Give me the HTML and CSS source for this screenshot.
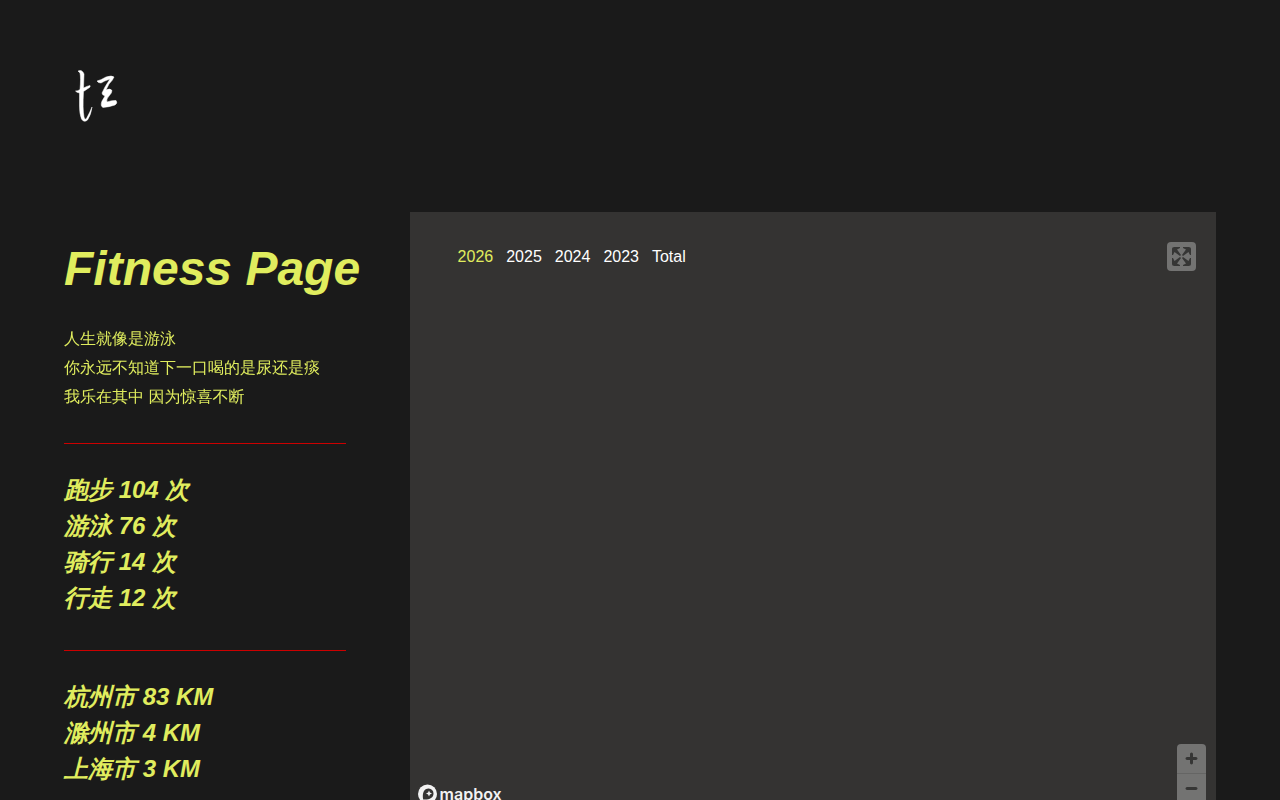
FILE: index.html
```html
<!DOCTYPE html>
<html lang="en">
<head>
<meta charset="utf-8">
<meta name="viewport" content="width=device-width, initial-scale=1">
<title>Fitness Page</title>
<link rel="stylesheet" href="styles.css">
</head>
<body>
<header class="header">
  <a class="logo" href="#" aria-label="Home">
    <svg viewBox="0 0 64 64" width="64" height="64" aria-hidden="true">
      <path d="M14 7Q18 5 20 10L19.500 24Q23 22 26 21.500Q27 23 24 24.500L19.500 27.500Q18.500 45 20 53Q21 57 23 53.500Q26 48 28 43Q27 51 23.500 56Q20 59 17.500 55Q15.500 50 15.500 42L15.500 29Q12.500 28.500 11.500 27Q14 27 16 25.500Q17 14 16 9Z"/>
      <path d="M33 17Q37 16 42 13Q48 11 50 13Q49 16 45 20L42 26Q46 24 48 26.500Q48 29 45 32Q42 35 43 38Q48 36 52 36.500Q54 39 51 41Q45 43 39 43.500Q36 42 38 37L41 32Q38 31 38 29L41 23Q44 18 46 15Q40 17 37 19Q34 19 33 17Z"/>
    </svg>
  </a>
</header>
<main class="layout">
  <section class="sidebar">
    <h1 class="title">Fitness Page</h1>
    <p class="intro">人生就像是游泳<br>你永远不知道下一口喝的是尿还是痰<br>我乐在其中 因为惊喜不断</p>
    <hr class="rule">
    <ul class="stats">
      <li>跑步 104 次</li>
      <li>游泳 76 次</li>
      <li>骑行 14 次</li>
      <li>行走 12 次</li>
    </ul>
    <hr class="rule">
    <ul class="stats">
      <li>杭州市 83 KM</li>
      <li>滁州市 4 KM</li>
      <li>上海市 3 KM</li>
    </ul>
  </section>
  <section class="map" aria-label="Map">
    <div class="map-top">
      <nav class="years" aria-label="Year">
        <button class="year year-active" type="button">2026</button>
        <button class="year" type="button">2025</button>
        <button class="year" type="button">2024</button>
        <button class="year" type="button">2023</button>
        <button class="year" type="button">Total</button>
      </nav>
      <div class="control-group">
        <button class="control" type="button" aria-label="Enter fullscreen">
          <svg viewBox="0 0 29 29" width="29" height="29"><path d="M24 16v5.500c0 1.750-.750 2.500-2.500 2.500H16v-1l3-1.500-4-5.500 1-1 5.500 4 1.500-3h1zM6 16l1.500 3 5.500-4 1 1-4 5.500 3 1.500v1H7.500C5.750 24 5 23.250 5 21.500V16h1zm7-11v1l-3 1.500 4 5.500-1 1-5.500-4L6 13H5V7.500C5 5.750 5.750 5 7.500 5H13zm11 2.500c0-1.750-.750-2.500-2.500-2.500H16v1l3 1.500-4 5.500 1 1 5.500-4 1.500 3h1V7.500z"/></svg>
        </button>
      </div>
    </div>
    <div class="map-bottom">
      <a class="mapbox" href="#" aria-label="Mapbox homepage">
        <svg viewBox="0 0 20 20" width="20" height="20" aria-hidden="true"><circle class="mark" cx="9.500" cy="10" r="9.500"/><path class="drop" d="M5.200 15.500C4 9 6 4.500 10.700 4.500A5 5 0 0 1 15.500 9.500C15.500 14 11 16 5.200 15.500Z"/><path class="mark" d="M11 6.500l.9 2.100 2.100.9-2.100.9-.9 2.100-.9-2.100-2.100-.9 2.100-.9Z"/></svg>
        <span>mapbox</span>
      </a>
      <div class="control-group">
        <button class="control" type="button" aria-label="Zoom in">
          <svg viewBox="0 0 29 29" width="29" height="29"><path d="M14.500 8.500c-.75 0-1.500.75-1.500 1.500v3h-3c-.75 0-1.500.75-1.500 1.500S9.250 16 10 16h3v3c0 .75.75 1.500 1.500 1.500S16 19.750 16 19v-3h3c.75 0 1.500-.75 1.500-1.500S19.750 13 19 13h-3v-3c0-.75-.75-1.500-1.500-1.500z"/></svg>
        </button>
        <button class="control" type="button" aria-label="Zoom out">
          <svg viewBox="0 0 29 29" width="29" height="29"><path d="M10 13c-.75 0-1.500.75-1.500 1.500S9.250 16 10 16h9c.75 0 1.500-.75 1.500-1.500S19.750 13 19 13h-9z"/></svg>
        </button>
      </div>
    </div>
  </section>
</main>
</body>
</html>
```
FILE: styles.css
```css
* {
  box-sizing: border-box;
}

body {
  margin: 0;
  height: 100vh;
  overflow: hidden;
  background: #1a1a1a;
  color: #e0ed5e;
  font-family: "Liberation Sans", "WenQuanYi Zen Hei", "Noto Sans CJK SC", sans-serif;
  font-size: 16px;
}

button {
  padding: 0;
  border: 0;
  background: none;
  font: inherit;
  cursor: pointer;
}

svg {
  display: block;
}

.header {
  padding: 64px 64px 84px;
}

.logo {
  display: block;
  width: 64px;
  fill: #fff;
  stroke: #fff;
  stroke-width: 0.5;
}

.layout {
  display: grid;
  grid-template-columns: 30% 70%;
  padding: 0 64px;
}

.sidebar {
  padding: 27px 64px 0 0;
}

.title {
  margin: 0 0 25px;
  font-size: 48px;
  font-style: italic;
  line-height: 60px;
  white-space: nowrap;
}

.intro {
  margin: 0 0 32px;
  line-height: 29px;
  white-space: nowrap;
}

.rule {
  height: 1px;
  margin: 0 0 28px;
  border: 0;
  background: #c00;
}

.stats {
  margin: 0 0 34px;
  padding: 0;
  list-style: none;
  font-family: "Liberation Sans", sans-serif;
  font-size: 24px;
  font-style: italic;
  font-weight: 700;
  line-height: 36px;
}

.map {
  display: flex;
  flex-direction: column;
  justify-content: space-between;
  height: 600px;
  background: #343332;
}

.map-top {
  display: flex;
  justify-content: space-between;
  align-items: center;
  padding: 30px 20px 0 48px;
}

.years {
  display: flex;
  gap: 13px;
}

.year {
  color: #fff;
}

.year-active {
  color: #e0ed5e;
}

.map-bottom {
  display: flex;
  justify-content: space-between;
  align-items: flex-end;
  padding: 0 10px 9px 8px;
}

.control-group {
  overflow: hidden;
  border-radius: 4px;
  background: #737372;
}

.control {
  display: block;
  width: 29px;
  height: 29px;
  fill: #363635;
}

.control + .control {
  height: 30px;
  border-top: 1px solid #656564;
}

.mapbox {
  display: flex;
  align-items: center;
  gap: 2px;
  margin-bottom: -1px;
  color: #f2f2f2;
  font-family: Inter, sans-serif;
  font-size: 16px;
  font-weight: 600;
  line-height: 18px;
  text-decoration: none;
}

.mark {
  fill: #f2f2f2;
}

.drop {
  fill: #343332;
}
```
